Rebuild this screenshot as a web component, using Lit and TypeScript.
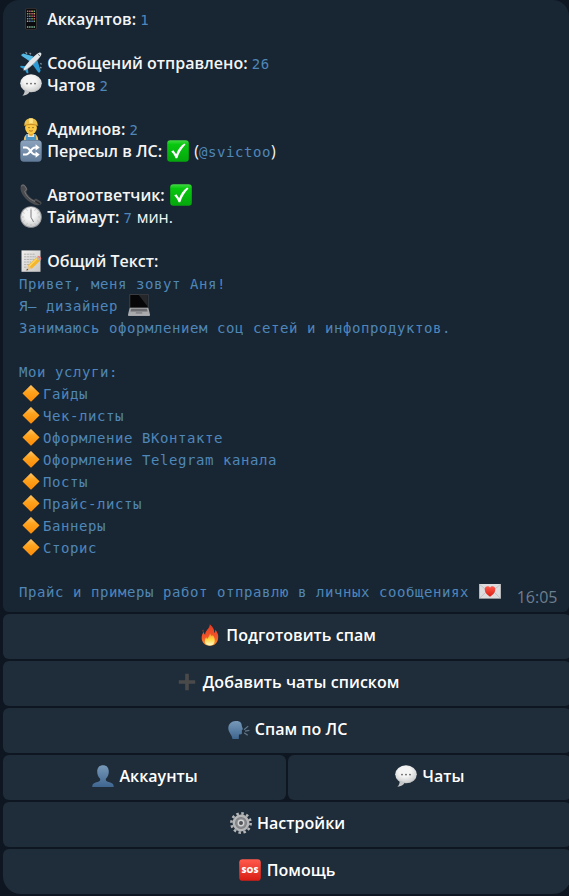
import { LitElement, html, css, svg, nothing } from "lit";
import { customElement, property } from "lit/decorators.js";

const bubbleIcon = svg`
  <ellipse cx="11" cy="9.3" rx="10.8" ry="9" fill="url(#pearl)"/>
  <path d="M4.5 15.5C5 18.5 4 20 2.4 21.8C6 21.5 8.5 20 9.8 17.5Z" fill="#c4c5c6"/>
  <path d="M1 13C4 18.6 16 19.8 21 13C18.5 18.8 6 20 1 13Z" fill="#a8a9ab"/>
  <circle cx="7" cy="9.6" r=".85" fill="#555"/><circle cx="11" cy="9.6" r=".85" fill="#555"/><circle cx="15" cy="9.6" r=".85" fill="#555"/>`;

const appColors = ["#d9675d", "#5aa6c9", "#d2b64c", "#78b061", "#a9a9b0", "#c76b9a", "#5b7fc4", "#64b5a5"];

const icons: Record<string, unknown> = {
  phone: svg`
    <rect x="5.3" y=".2" width="11.4" height="21.6" rx="1.8" fill="#4a3f3b"/>
    <rect x="6" y=".8" width="10" height="20.4" rx="1.3" fill="#0b0a0c"/>
    ${[0, 1, 2, 3, 4, 5].map((r) => [0, 1, 2, 3].map((c) => svg`<rect x=${6.9 + c * 2.2} y=${2.4 + r * 2.5 + (r === 5 ? 3.4 : 0)} width="1.5" height="1.5" rx=".3" fill=${r === 5 ? "#7fc0a0" : appColors[(r * 3 + c * 5) % 8]}/>`))}`,
  plane: svg`
    <path d="M10 9.6L2.2 4.2L1 3L3.2 1.5L13.5 4.6Z" fill="#55b9e6"/>
    <path d="M12.2 12L17.8 19.8L19.2 21L20.6 18.8L17.4 8.5Z" fill="#2c9bd5"/>
    <path d="M6 14.2L.8 13.8L0 15L4.6 17.4L7 21.6L8.4 21L7.8 15.8Z" fill="#2f9cd4"/>
    <path d="M19 .8C20.6 0 22 1.2 21.2 3C20.2 5.6 16.4 9.2 12.6 12.8C9.4 15.8 6 18.2 3.4 18.6C3.6 16 6.2 12.4 9.2 9.3C12.8 5.5 16.5 2 19 .8Z" fill="#e3e7ea"/>
    <path d="M21.3 2.4C19.5 6.5 10 15.6 3.4 18.6C9.2 17.3 19.5 7.3 21.3 2.4Z" fill="#9ba5ad"/>
    <path d="M18 2.3L20 3.8" stroke="#40505c" stroke-width=".8"/>
    <path d="M5.5 .3l1.6 1.5M9.6 1l1.4 1.3M20.4 11.2l1.2 1.2M20.2 15l1.2 1.2" stroke="#8799a4" stroke-width="1.3"/>`,
  bubble: bubbleIcon,
  worker: svg`
    <path d="M3.8 22C4 17.4 6.4 15.8 11 15.6C15.6 15.8 18 17.4 18.2 22Z" fill="#e9c069"/>
    <path d="M6.5 16.2L8.6 15.8H13.4L15.5 16.2L15.8 22H6.2Z" fill="#e8e4d7"/>
    <path d="M6.3 16.3H7.9V19H14.1V16.3H15.7L16.2 22H5.8Z" fill="#4b95c6"/>
    <path d="M8.6 13H13.4V16.5C12.6 18.4 9.4 18.4 8.6 16.5Z" fill="#e6a92a"/>
    <ellipse cx="11" cy="9.7" rx="5.9" ry="6.4" fill="#fbc944"/>
    <path d="M4.3 7.3C4.3 2.6 7.2 .2 11 .2S17.7 2.6 17.7 7.3Q11 5 4.3 7.3Z" fill="#edc04b"/>
    <path d="M9 .8Q11 -.2 13 .8L12.7 5.5H9.3Z" fill="#ffe186"/>
    <path d="M3.6 7.5Q11 3.8 18.4 7.5L17.7 8.1Q11 5.8 4.3 8.1Z" fill="#c98f25"/>
    <circle cx="9" cy="9.6" r=".7" fill="#6b4518"/><circle cx="13" cy="9.6" r=".7" fill="#6b4518"/>
    <path d="M9.2 12.6Q11 13.8 12.8 12.6" stroke="#a4601b" stroke-width=".8" fill="none"/>`,
  shuffle: svg`
    <rect x=".3" y=".3" width="21.4" height="21.4" rx="3.6" fill="url(#steel)"/>
    <path d="M3 7.5H6.2C9.8 7.5 11 14.5 15 14.5H16.5M3 14.5H6.2C9.8 14.5 11 7.5 15 7.5H16.5" fill="none" stroke="#fff" stroke-width="1.9"/>
    <path d="M15.6 4.3L19.7 7.5L15.6 10.5ZM15.6 11.5L19.7 14.5L15.6 17.7Z" fill="#fff"/>`,
  check: svg`
    <rect x=".2" y=".2" width="21.6" height="21.6" rx="3.2" fill="url(#green)"/>
    <path d="M4.2 11.6L6.4 10.2L9.2 14.2C11 9.6 13.6 6.2 17.2 3.6L18.5 4.6C14.8 8.4 12 12.8 10.3 18.2H8.6C7.5 15.7 6.2 13.6 4.2 11.6Z" fill="#fff"/>`,
  receiver: svg`
    <path d="M1 1.2C2.2 -.2 4 0 5.3 1.5L7.3 4.7C7.8 5.8 7.3 6.8 6.2 7.7C7.1 10.8 10.8 14.6 14 15.9C15 14.9 16 14.5 17.1 15.2L20.7 17.5C22 18.6 21.8 19.8 20.7 20.6C16.2 22.5 10.4 19.5 5.8 14.8C1.5 10.3 -.6 4.9 1 1.2Z" fill="#4b4c4f"/>
    <path d="M1.2 2.2C2.8 .5 4.2 1.2 5.1 2.3L6.4 4.6C6.5 5.8 5.4 6.6 4.7 7.4C6 12 10.5 16.1 15 17.4" fill="none" stroke="#77787b" stroke-width="1"/>
    <path d="M15.4 17.2L20 19.9" stroke="#232427" stroke-width="1.3"/>`,
  clock: svg`
    <circle cx="11" cy="11" r="10.8" fill="#96989b"/>
    <circle cx="11" cy="11" r="9.9" fill="url(#pearl)"/>
    <g stroke="#aaa" stroke-width=".7"><path d="M11 2.2v1.5M11 18.3v1.5M2.2 11h1.5M18.3 11h1.5M6.6 3.4l.7 1.2M15.4 3.4l-.7 1.2M6.6 18.6l.7-1.2M15.4 18.6l-.7-1.2M3.4 6.6l1.2.7M18.6 6.6l-1.2.7M3.4 15.4l1.2-.7M18.6 15.4l-1.2-.7"/></g>
    <path d="M11 3.6V11.3L13.6 16" fill="none" stroke="#7c7d80" stroke-width="1"/>`,
  memo: svg`
    <path d="M1.5 .4H20.5V21.8H1.5Z" fill="url(#paper)"/>
    <g stroke="#a5a5a5" stroke-width=".8" stroke-dasharray="2.2 .6"><path d="M4 4.2h11M4 6.8h12M4 9.4h10M4 12h7M4 14.6h5M4 17.2h3"/></g>
    <path d="M6.4 20.6L8 15.2L11.7 18.8Z" fill="#e8c58d"/>
    <path d="M6.4 20.6L7 18.7L8.3 20Z" fill="#33302c"/>
    <path d="M8 15.2L16.4 7.4L19.8 11L11.7 18.8Z" fill="#f3b62c"/>
    <path d="M9.1 16.2L17.3 8.4" stroke="#ffda67" stroke-width="1.2"/>
    <path d="M16.4 7.4L17.5 6.4L20.9 9.9L19.8 11Z" fill="#aeb4b8"/>
    <path d="M17.5 6.4C19 5.2 22.3 8 20.9 9.9Z" fill="#ee7d78"/>`,
  laptop: svg`
    <path d="M1.6 .2H20.4V14H1.6Z" fill="#555659"/>
    <path d="M2.2 .8H19.8V13.3H2.2Z" fill="#060608"/>
    <path d="M10.5 .8H19.8V12.8Z" fill="#26272a"/>
    <path d="M1.6 14H20.4L21.9 20.2H.1Z" fill="#a8a9ab"/>
    <path d="M3.2 14.8H18.8L19.6 17.4H2.4Z" fill="#6b6c70"/>
    <path d="M8 18H14L14.4 19.7H7.6Z" fill="#87888b"/>
    <path d="M.1 20.2H21.9V21.2Q21.9 21.8 21 21.8H1Q.1 21.8 .1 21.2Z" fill="#d0d1d2"/>`,
  diamond: svg`
    <path d="M11 3L19.2 10.9Q19.6 11.3 19.2 11.7L11.4 19.4Q11 19.8 10.6 19.4L2.8 11.7Q2.4 11.3 2.8 10.9L10.6 3.2Z" fill="url(#amber)"/>`,
  letter: svg`
    <rect x=".2" y="4" width="21.6" height="14.6" fill="#dcdbdd"/>
    <path d="M.5 18.3L8 11.1M21.5 18.3L14 11.1M.5 4.4L11 12.9L21.5 4.4" fill="none" stroke="#b9b6b9" stroke-width=".7"/>
    <path d="M11 16.7C8.4 14.9 5.7 12.5 5.7 9.4C5.7 6.1 9.6 5.2 11 7.8C12.4 5.2 16.3 6.1 16.3 9.4C16.3 12.5 13.6 14.9 11 16.7Z" fill="url(#red)"/>`,
  fire: svg`
    <path d="M10.8 .2C14.4 3.2 15.6 6 15.1 9C16 8.4 16.4 7.3 16.2 5.8C18.8 8.5 19.6 11.2 19.1 14.6C18.4 19.2 15.6 21.8 11 21.8C6.2 21.8 3.2 19 2.7 14.8C2.4 12 3.4 9.5 4.7 7.8C4.9 9.3 5.3 10.2 6.2 10.7C5.9 6.6 10.9 4.6 10.8 .2Z" fill="url(#flame)"/>
    <path d="M4.2 5.4Q4.8 7 4 8Q2.9 6.8 4.2 5.4Z" fill="#e64524"/>
    <path d="M11.2 9.4C12 12.3 13.4 12.4 13.8 10.9C16.8 14.4 16.6 21.4 10.8 21.5C5.2 21.3 5 16.4 7.2 13.2C7.8 15 8.5 15 9 14.1C9.7 12.8 10.5 11.2 11.2 9.4Z" fill="url(#core)"/>`,
  plus: svg`<path d="M9.2 2.8H12.8V9.2H19.2V12.8H12.8V19.2H9.2V12.8H2.8V9.2H9.2Z" fill="#4b4a4b"/>`,
  speaking: svg`
    <path d="M7.6 3C12 2.6 14 5 13.8 8.1L14.9 11.1Q15 11.8 13.9 12L13.9 15.5Q13.7 16.7 10.9 16.5L10.8 21H4.4C4.6 17.3 .2 14.5 .3 9.9C.5 5.8 3.5 3.1 7.6 3Z" fill="url(#blue)"/>
    <path d="M16 11.7L20.2 8.1M17 13.2L21.4 12.4M16.2 14.7L19.7 17.3" stroke="#64788c" stroke-width="1.2"/>`,
  person: svg`
    <path d="M.2 22C.2 17.8 3.2 17.6 6.8 16.4C8.2 15.9 8.4 14.7 8.1 13.7C6.2 12 5.1 9.3 5.2 6.3C5.3 2.3 7.6 .2 11 .2S16.7 2.3 16.8 6.3C16.9 9.3 15.8 12 13.9 13.7C13.6 14.7 13.8 15.9 15.2 16.4C18.8 17.6 21.8 17.8 21.8 22Z" fill="url(#blue)"/>`,
  gear: svg`
    <circle cx="11" cy="11" r="9.6" fill="none" stroke="#b4b6b8" stroke-width="2.6" stroke-dasharray="2.5 2.526"/>
    <circle cx="11" cy="11" r="6.8" fill="#8b8d90" stroke="#b5b6b8" stroke-width="3.2"/>
    <circle cx="11" cy="11" r="5.4" fill="none" stroke="#7b7d80" stroke-width="1.1"/>
    <circle cx="11" cy="11" r="2.7" fill="#4f5256" stroke="#d2d3d4" stroke-width="1.4"/>`,
  sos: svg`
    <rect x=".2" y=".2" width="21.6" height="21.6" rx="3.4" fill="url(#red)"/>
    <text class="sos" x="11" y="14.3" text-anchor="middle" textLength="17" lengthAdjust="spacingAndGlyphs">SOS</text>`,
};

@customElement("emoji-icon")
class EmojiIcon extends LitElement {
  @property() name = "";
  static styles = css`
    :host { display: inline-block; width: 24px; height: 22px; flex: none; vertical-align: top; }
    svg { display: block; width: 22px; height: 22px; margin: 0 1px; overflow: visible; }
    .sos { font: 800 9px "Open Sans", sans-serif; fill: #fff; }
  `;
  render() {
    return html`<svg viewBox="0 0 22 22">
      <defs>
        <radialGradient id="pearl" cx=".45" cy=".35" r=".7"><stop offset=".4" stop-color="#f4f4f4"/><stop offset="1" stop-color="#c3c4c5"/></radialGradient>
        <linearGradient id="steel" x2="0" y2="1"><stop stop-color="#8ba3bd"/><stop offset="1" stop-color="#617a97"/></linearGradient>
        <linearGradient id="green" x2="0" y2="1"><stop stop-color="#43d944"/><stop offset=".2" stop-color="#08c70f"/><stop offset="1" stop-color="#05a60c"/></linearGradient>
        <linearGradient id="paper" x2="1" y2="1"><stop stop-color="#f1f0ee"/><stop offset="1" stop-color="#c7c6c4"/></linearGradient>
        <linearGradient id="amber" x2="0" y2="1"><stop stop-color="#ffc568"/><stop offset=".4" stop-color="#ffa31e"/><stop offset="1" stop-color="#fb8b08"/></linearGradient>
        <linearGradient id="red" x2="0" y2="1"><stop stop-color="#ff5a4c"/><stop offset="1" stop-color="#d91d14"/></linearGradient>
        <linearGradient id="flame" x2="0" y2="1"><stop stop-color="#e33a22"/><stop offset=".6" stop-color="#f4562a"/><stop offset="1" stop-color="#fd9c28"/></linearGradient>
        <linearGradient id="core" x2="0" y2="1"><stop stop-color="#ff8f32"/><stop offset=".5" stop-color="#ffd742"/><stop offset="1" stop-color="#fffbd0"/></linearGradient>
        <linearGradient id="blue" x2="0" y2="1"><stop stop-color="#7799b9"/><stop offset="1" stop-color="#3f6690"/></linearGradient>
      </defs>
      ${icons[this.name] ?? nothing}
    </svg>`;
  }
}

const e = (name: string) => html`<emoji-icon name=${name}></emoji-icon>`;
const m = (text: string) => html`<span class="mono">${text}</span>`;
const b = (text: string) => html`<b>${text}</b>`;

const lines: unknown[] = [
  html`${e("phone")} ${b("Аккаунтов:")} ${m("1")}`,
  nothing,
  html`${e("plane")} ${b("Сообщений отправлено:")} ${m("26")}`,
  html`${e("bubble")} ${b("Чатов")} ${m("2")}`,
  nothing,
  html`${e("worker")} ${b("Админов:")} ${m("2")}`,
  html`${e("shuffle")} ${b("Пересыл в ЛС:")} ${e("check")} (${m("@svictoo")})`,
  nothing,
  html`${e("receiver")} ${b("Автоответчик:")} ${e("check")}`,
  html`${e("clock")} ${b("Таймаут:")} ${m("7")} мин.`,
  nothing,
  html`${e("memo")} ${b("Общий Текст:")}`,
  m("Привет, меня зовут Аня!"),
  html`${m("Я— дизайнер ")}${e("laptop")}`,
  m("Занимаюсь оформлением соц сетей и инфопродуктов."),
  nothing,
  m("Мои услуги:"),
  ...["Гайды", "Чек-листы", "Оформление ВКонтакте", "Оформление Telegram канала", "Посты", "Прайс-листы", "Баннеры", "Сторис"].map(
    (t) => html`${e("diamond")}${m(t)}`
  ),
  nothing,
  html`${m("Прайс и примеры работ отправлю в личных сообщениях ")}${e("letter")}`,
];

const keyboard: [string, string][][] = [
  [["fire", "Подготовить спам"]],
  [["plus", "Добавить чаты списком"]],
  [["speaking", "Спам по ЛС"]],
  [["person", "Аккаунты"], ["bubble", "Чаты"]],
  [["gear", "Настройки"]],
  [["sos", "Помощь"]],
];

@customElement("app-root")
class AppRoot extends LitElement {
  static styles = css`
    :host {
      display: block; box-sizing: border-box; width: 569px; height: 896px; padding-left: 3px; overflow: hidden;
      background: #0e1621; color: #f5f5f5; font: 16px/22px "Open Sans", sans-serif;
    }
    .message {
      position: relative; box-sizing: border-box; height: 612px; padding: 8px 16px 0;
      background: #182533; border-radius: 16px 16px 6px 6px;
    }
    .line { height: 22px; white-space: pre; }
    b, .key { font-weight: 600; }
    .mono { font: 14px/22px "DejaVu Sans Mono", monospace; letter-spacing: 0.572px; color: #4f87b9; }
    .time { position: absolute; right: 11.5px; bottom: 4px; color: #6d7f8f; }
    .keyboard { display: flex; flex-direction: column; gap: 2px; margin: 2px -2px 0 0; }
    .row { display: flex; gap: 2px; height: 45px; }
    .key {
      flex: 1; display: flex; justify-content: center; box-sizing: border-box; padding-top: 10px;
      background: #1f2c39; border-radius: 6px; white-space: pre; color: #fff; letter-spacing: 0.04px;
    }
    .row:last-child .key { border-radius: 6px 6px 18px 18px; }
  `;
  render() {
    return html`
      <div class="message">
        ${lines.map((l) => html`<div class="line">${l}</div>`)}
        <span class="time">16:05</span>
      </div>
      <div class="keyboard">
        ${keyboard.map((row) => html`<div class="row">${row.map(([i, t]) => html`<div class="key">${e(i)}<span> ${t}</span></div>`)}</div>`)}
      </div>`;
  }
}
